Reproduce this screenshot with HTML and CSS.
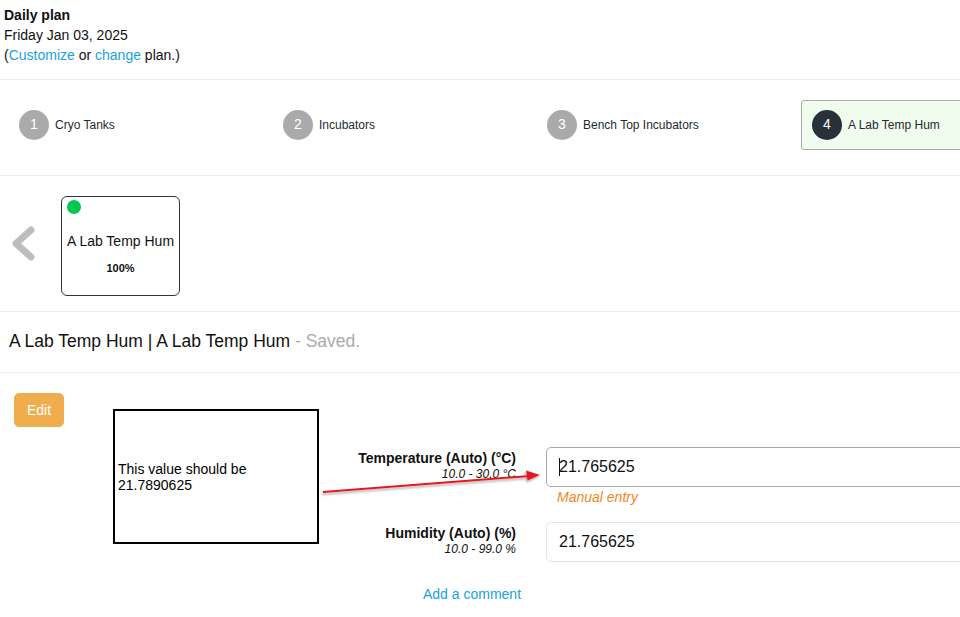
FILE: index.html
```html
<!DOCTYPE HTML>
<html lang="en">

<head>
    <title>Daily plan</title>
    <link rel="stylesheet" href="styles.css">
</head>

<body>
    <div class="plan-head">
        <div class="plan-title">Daily plan</div>
        <div>Friday Jan 03, 2025</div>
        <div>(<a href="#">Customize</a> or <a href="#">change</a> plan.)</div>
    </div>

    <div class="steps">
        <div class="step"><span class="step-num">1</span><span class="step-name">Cryo Tanks</span></div>
        <div class="step"><span class="step-num">2</span><span class="step-name">Incubators</span></div>
        <div class="step"><span class="step-num">3</span><span class="step-name">Bench Top Incubators</span></div>
        <div class="step active"><span class="step-num">4</span><span class="step-name">A Lab Temp Hum</span></div>
    </div>

    <div class="stations">
        <svg class="back" width="40" height="40" viewBox="0 0 40 40">
            <polyline points="23,4 8,17.5 23,31" fill="none" stroke="#bdbdbd" stroke-width="7"
                stroke-linecap="round" stroke-linejoin="round" />
        </svg>
        <div class="station">
            <span class="dot"></span>
            <div class="station-name">A Lab Temp Hum</div>
            <div class="station-pct">100%</div>
        </div>
    </div>

    <div class="record-title">A Lab Temp Hum | A Lab Temp Hum <span class="saved">- Saved.</span></div>

    <div class="entry">
        <button class="btn-edit">Edit</button>

        <div class="fields">
            <div class="field-label">
                <div class="label-main">Temperature (Auto) (°C)</div>
                <div class="label-range">10.0 - 30.0 °C</div>
            </div>
            <div class="field-value">
                <div class="value-wrap">
                    <input class="value-input focus" type="text" value="21.765625">
                    <span class="caret"></span>
                </div>
                <div class="manual">Manual entry</div>
            </div>

            <div class="field-label">
                <div class="label-main">Humidity (Auto) (%)</div>
                <div class="label-range">10.0 - 99.0 %</div>
            </div>
            <div class="field-value">
                <input class="value-input" type="text" value="21.765625">
            </div>
        </div>

        <div class="comment"><a href="#">Add a comment</a></div>

        <!-- review note drawn over the form -->
        <div class="note">This value should be 21.7890625</div>
        <svg class="arrow" width="240" height="40" viewBox="0 0 240 40">
            <defs>
                <filter id="shade" x="-10%" y="-50%" width="120%" height="200%">
                    <feDropShadow dx="-1" dy="2" stdDeviation="1.2" flood-color="#777" flood-opacity="0.6" />
                </filter>
            </defs>
            <g filter="url(#shade)">
                <line x1="3" y1="27" x2="210" y2="11" stroke="#e8141b" stroke-width="2" />
                <polygon points="220,10 206,5.5 207.5,15.5" fill="#e8141b" />
            </g>
        </svg>
    </div>
</body>

</html>
```

FILE: styles.css
```css
body {
    margin: 0;
    font-family: "Liberation Sans", Arial, sans-serif;
    font-size: 14px;
    color: #111;
    background: #fff;
    overflow-x: hidden;
}

a {
    color: #1ba1e2;
    text-decoration: none;
}

.plan-head {
    padding: 5px 4px 14px;
    line-height: 20px;
    border-bottom: 1px solid #ebebeb;
}

.plan-title {
    font-weight: bold;
}

/* steps */
.steps {
    display: flex;
    padding: 20px 0 25px 9px;
    border-bottom: 1px solid #ebebeb;
    overflow: hidden;
}

.step {
    flex: 0 0 264px;
    box-sizing: border-box;
    display: flex;
    align-items: center;
    gap: 6px;
    padding: 9px 10px 9px 9px;
    border: 1px solid transparent;
    border-radius: 3px;
}

.step.active {
    background: #effcee;
    border-color: #aaa;
    padding-left: 10px;
}

.step-num {
    width: 30px;
    height: 30px;
    border-radius: 50%;
    background: #aaa;
    color: #fff;
    font-size: 14px;
    line-height: 28px;
    text-align: center;
}

.step.active .step-num {
    background: #263238;
}

.step-name {
    font-size: 12px;
    color: #1e2a30;
}

/* stations */
.stations {
    display: flex;
    align-items: center;
    padding: 20px 0 15px 8px;
    border-bottom: 1px solid #ebebeb;
}

.back {
    margin-right: 13px;
}

.station {
    position: relative;
    box-sizing: border-box;
    width: 119px;
    height: 100px;
    padding-top: 36px;
    border: 1px solid #333;
    border-radius: 6px;
    text-align: center;
}

.dot {
    position: absolute;
    top: 3px;
    left: 5px;
    width: 14px;
    height: 14px;
    border-radius: 50%;
    background: #00c853;
}

.station-name {
    font-size: 14px;
    line-height: 16px;
}

.station-pct {
    margin-top: 13px;
    font-size: 11px;
    line-height: 12px;
    font-weight: bold;
}

.record-title {
    padding: 18px 9px 20px;
    font-size: 17.5px;
    line-height: 22px;
    border-bottom: 1px solid #ebebeb;
}

.saved {
    color: #aaa;
}

/* entry form */
.entry {
    position: relative;
    padding: 20px 0 0 14px;
    overflow: hidden;
    height: 224px;
}

.btn-edit {
    display: block;
    padding: 8px 12px;
    border: 1px solid #f0ad4e;
    border-radius: 5px;
    background: #f0ad4e;
    color: #fff;
    font-family: inherit;
    font-size: 14px;
    line-height: 16px;
}

.fields {
    display: grid;
    grid-template-columns: 502px 500px;
    column-gap: 30px;
    row-gap: 17px;
    margin-top: 20px;
}

.field-label {
    padding-top: 3px;
    text-align: right;
}

.label-main {
    font-weight: bold;
    line-height: 16px;
}

.label-range {
    font-size: 12px;
    font-style: italic;
    line-height: 16px;
}

.value-wrap {
    position: relative;
}

.value-input {
    display: block;
    box-sizing: border-box;
    width: 100%;
    height: 40px;
    padding: 0 12px;
    border: 1px solid #e4e4e4;
    border-radius: 5px;
    font-family: inherit;
    font-size: 16px;
    color: #111;
    outline: none;
}

.value-input.focus {
    border-color: #a9a9a9;
}

.caret {
    position: absolute;
    top: 11px;
    left: 13px;
    width: 1px;
    height: 18px;
    background: #111;
}

.manual {
    margin: 2px 0 0 11px;
    font-style: italic;
    line-height: 16px;
    color: #f7861e;
}

.comment {
    width: 916px;
    margin-top: 22px;
    line-height: 20px;
    text-align: center;
}

.note {
    position: absolute;
    top: 36px;
    left: 113px;
    box-sizing: border-box;
    width: 206px;
    height: 135px;
    display: flex;
    align-items: center;
    padding: 0 3px;
    border: 2px solid #000;
    background: #fff;
    line-height: 16px;
    color: #000;
}

.arrow {
    position: absolute;
    top: 92px;
    left: 320px;
}
```
